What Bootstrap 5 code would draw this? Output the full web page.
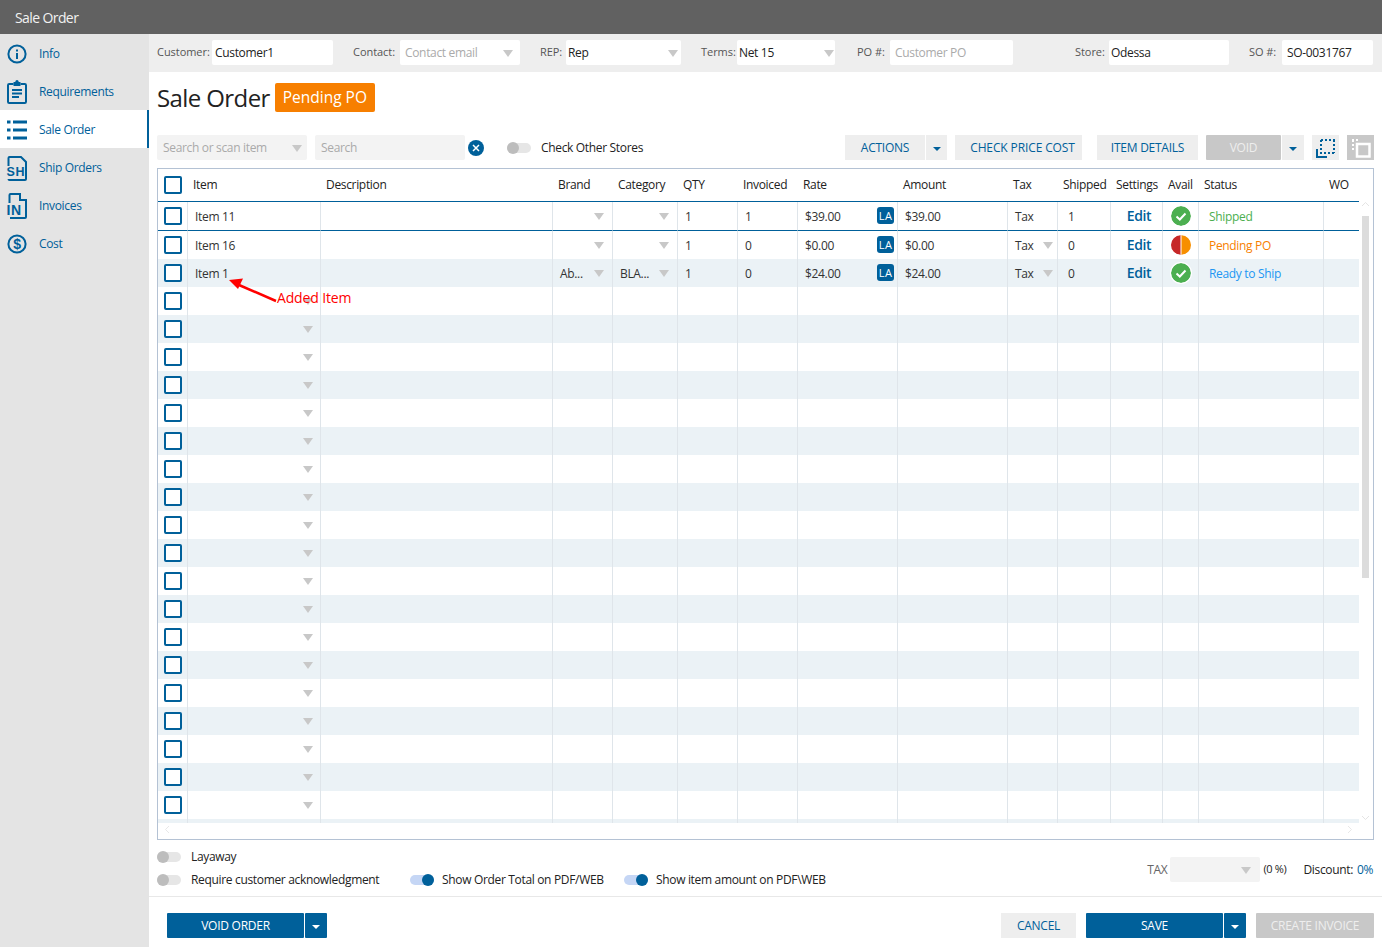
<!DOCTYPE html>
<html lang="en">
<head>
<meta charset="utf-8">
<title>Sale Order</title>
<link rel="stylesheet" href="https://cdn.jsdelivr.net/npm/bootstrap@5.3.0/dist/css/bootstrap.min.css">
<style>
html,body{height:100%;overflow:hidden}
body{font-family:"Open Sans","Noto Sans",sans-serif;font-size:12px;color:#222;letter-spacing:-.33px;background:#fff}
.app-head{height:34px;background:#616161;color:#f2f2f2;font-size:14px;letter-spacing:-.6px;padding-left:15px;line-height:36px;flex:none}
.app-body{height:913px}
.side{width:149px;background:#e4e4e4;flex:none}
.side-item{height:38px;display:flex;align-items:center;color:#00609a;text-decoration:none;padding-left:6px;padding-top:1px}
.side-item svg{width:22px;height:26px;flex:none;margin-right:11px}
.side-item.sel{background:#fff;border-right:2px solid #00609a}
.main{min-width:0;flex:1 1 0;position:relative}
.topbar{height:38px;background:#eee;padding:6px 9px 7px 8px;color:#555;flex:none}
.lbl{font-size:11px;letter-spacing:-.05px}
.fld{display:flex;align-items:center;justify-content:space-between;flex:none}
.inp{height:25px;background:#fff;border-radius:2px;padding-left:2px;line-height:26px;color:#222;position:relative;white-space:nowrap}
.inp.pad3{padding-left:3px}
.tri{display:inline-block;width:0;height:0;border-left:5.5px solid transparent;border-right:5.5px solid transparent;border-top:7px solid #c8c8c8}
.inp .tri{position:absolute;right:7px;top:10px}
.inp.tr3 .tri{right:3px}
.inp.tr1 .tri{right:1px}
.titlerow{height:40px;padding:11px 0 0 8px;flex:none}
.ttl{font-size:24px;line-height:29px;color:#222;margin:0;font-weight:400;letter-spacing:-.6px}
.stat{background:#f77f00;color:#fff;font-size:15.5px;height:29px;line-height:29px;padding:0 8px;border-radius:2px;margin-left:5px;letter-spacing:0}
.tools{height:25px;margin:23px 8px 0 8px;flex:none}
.grayinp{height:25px;background:#f3f3f3;border-radius:2px;color:#aaa;line-height:25px;padding-left:6px;position:relative}
.grayinp .tri{position:absolute;right:5px;top:10px}
.grayinp.tr9 .tri{right:9px}
.clr{width:16px;height:16px;flex:none}
.sw{width:24px;height:10px;border-radius:5px;background:#e6e6e6;position:relative;display:inline-block;flex:none}
.sw::after{content:"";position:absolute;left:0;top:-1px;width:12px;height:12px;border-radius:50%;background:#bdbdbd}
.sw.on{background:#c5d6f5}
.sw.on::after{left:12px;background:#00609a}
.tb{height:25px;line-height:25px;background:#eee;color:#00609a;text-align:center;border:0;padding:0;flex:none;font-size:12px;letter-spacing:-.25px;border-radius:0}
.tb.wide{padding-left:8px;letter-spacing:-.12px}
.tb.pri{background:#00609a;color:#fff;border-radius:1px}
.tb.dis{background:#c8c8c8;color:#eee;border-radius:1px}
.caret{width:0;height:0;display:inline-block;border-left:4px solid transparent;border-right:4px solid transparent;border-top:4px solid #00609a;vertical-align:middle}
.pri .caret{border-top-color:#fff}
.ml1{margin-left:1px}.ml8{margin-left:8px}
.ticon{width:27px;height:25px;background:#eee;flex:none;display:flex;align-items:center;justify-content:center}
.ticon.dis{background:#c8c8c8}
.gridbox{height:672px;margin:8px 8px 0 8px;border:1px solid #b4c2d4;position:relative;flex:none;width:1217px}
.gridclip{height:654px;width:1201px;overflow:hidden}
.dt{table-layout:fixed;width:1201px;margin:0;border-collapse:separate;border-spacing:0;--bs-table-bg:transparent;color:#333;font-size:12px}
.dt th,.dt td{padding:0;font-weight:400;vertical-align:middle;border:0;white-space:nowrap;overflow:hidden;position:relative}
.dt thead th{height:33px;border-bottom:1px solid #00609a;color:#222;padding-left:5px}
.dt thead th.chk{padding-left:6px}
.dt tbody td{height:28px;border-right:1px solid #dfe5ea;padding-left:7px;padding-top:2px}
.dt tbody tr.first td{height:29px;border-bottom:1px solid #00609a}
.dt tbody td.chk{padding-left:6px;padding-top:0}
.dt tbody td.nop{padding-top:0}
.dt tbody td.pl10{padding-left:10px}
.dt tbody td.last{border-right:0}
.dt tbody tr.shade td{background:#ebf2f6}
.box{width:18px;height:18px;border:2px solid #00609a;border-radius:2px;background:#fff;display:block}
.dt .tri{position:absolute;right:8px;top:11px}
.dt td.itm .tri{right:7px}
.dt .tri.rtax{right:4px}
.edit{color:#00609a;font-size:14px;font-weight:600;display:block;text-align:center;letter-spacing:-.35px;padding-bottom:2px;margin-left:-2px}
.la{position:absolute;right:3px;top:5px;width:17px;height:17px;background:#00609a;color:#fff;border-radius:3px;font-size:11px;line-height:18px;text-align:center;letter-spacing:.3px}
.av{width:20px;height:20px;display:block;margin-left:1px;border-radius:50%}
.av.ring{box-shadow:0 0 0 1px #fff}
.c-ship{color:#4caf50}.c-pend{color:#f77f00}.c-ready{color:#2196f3}
.sb{position:absolute;right:0;top:32px;width:15px;bottom:18px}
.sb-t{position:absolute;left:4px;top:15px;width:7px;height:362px;background:#dcdcdc}
.note{position:absolute;left:119px;top:119px;color:#f00;font-size:14px;line-height:20px;letter-spacing:-.15px;white-space:nowrap}
.arr{position:absolute;left:69px;top:108px;width:50px;height:26px}
.opts{height:57px;padding:5px 8px 0;flex:none;border-bottom:1px solid #e8e8e8}
.optline{height:23px}
.footer{height:42px;padding:16px 8px 0 18px;flex:none}
.c-link{color:#00609a;margin-left:1px}
.taxblk{margin-top:12px;margin-right:1px;height:25px}
.hscr{position:absolute;bottom:5px}
</style>
</head>
<body>
<div class="app-head">Sale Order</div>
<div class="app-body d-flex">
  <nav class="side">
    <a class="side-item" href="#"><svg viewBox="0 0 22 26"><circle cx="11" cy="13" r="8.6" fill="none" stroke="#00609a" stroke-width="2"/><rect x="10" y="12" width="2" height="6" fill="#00609a"/><rect x="10" y="8.5" width="2" height="2" fill="#00609a"/></svg>Info</a>
    <a class="side-item" href="#"><svg viewBox="0 0 22 26"><path d="M7.500 5H3.200Q2 5 2 6.200V22.800Q2 24 3.200 24H18.800Q20 24 20 22.800V6.200Q20 5 18.800 5H14.500" fill="none" stroke="#00609a" stroke-width="2"/><path d="M7.500 3H9.200Q9.500 1 11 1T12.800 3H14.500V7H7.500Z" fill="#00609a"/><path d="M6 11H16M6 14.500H16M6 18H13" stroke="#00609a" stroke-width="2"/></svg>Requirements</a>
    <a class="side-item sel" href="#"><svg viewBox="0 0 22 26"><path d="M1 5H4.500M1 13H4.500M1 21H4.500" stroke="#00609a" stroke-width="3"/><path d="M7 5H21M7 13H21M7 21H21" stroke="#00609a" stroke-width="3"/></svg>Sale Order</a>
    <a class="side-item" href="#"><svg viewBox="0 0 22 26"><path d="M2.500 11V3Q2.500 2 3.500 2H15L20 7V24Q20 25 19 25H3.500Q2.500 25 2.500 24" fill="none" stroke="#00609a" stroke-width="2"/><text x="0.500" y="21" font-family="Liberation Sans,sans-serif" font-size="12.5" font-weight="700" fill="#00609a" letter-spacing=".7">SH</text></svg>Ship Orders</a>
    <a class="side-item" href="#"><svg viewBox="0 0 22 26"><path d="M3.500 10V2Q3.500 1 4.500 1H14V7H20V24Q20 25 19 25H4" fill="none" stroke="#00609a" stroke-width="2"/><text x="0.500" y="22" font-family="Liberation Sans,sans-serif" font-size="14" font-weight="700" fill="#00609a" letter-spacing=".5">IN</text></svg>Invoices</a>
    <a class="side-item" href="#"><svg viewBox="0 0 22 26"><circle cx="11" cy="13" r="8.6" fill="none" stroke="#00609a" stroke-width="2"/><text x="11" y="18" text-anchor="middle" font-family="Liberation Sans,sans-serif" font-size="14" font-weight="700" fill="#00609a">$</text></svg>Cost</a>
  </nav>
  <main class="main d-flex flex-column">
    <div class="topbar d-flex">
      <div class="fld" style="width:176px"><span class="lbl">Customer:</span><span class="inp pad3" style="width:121px">Customer1</span></div>
      <div class="fld ms-auto" style="width:167px"><span class="lbl">Contact:</span><span class="inp" style="width:120px;padding-left:5px;color:#aaa">Contact email<i class="tri"></i></span></div>
      <div class="fld ms-auto" style="width:141px"><span class="lbl">REP:</span><span class="inp tr3" style="width:115px">Rep<i class="tri"></i></span></div>
      <div class="fld ms-auto" style="width:134px"><span class="lbl">Terms:</span><span class="inp tr1" style="width:98px">Net 15<i class="tri"></i></span></div>
      <div class="fld" style="width:156px;margin-left:22px"><span class="lbl">PO #:</span><span class="inp" style="width:123px;padding-left:5px;color:#aaa">Customer PO</span></div>
      <div class="fld" style="width:154px;margin-left:62px"><span class="lbl">Store:</span><span class="inp" style="width:120px">Odessa</span></div>
      <div class="fld ms-auto" style="width:124px"><span class="lbl">SO #:</span><span class="inp" style="width:91px;padding-left:5px">SO-0031767</span></div>
    </div>
    <div class="titlerow d-flex align-items-start"><h1 class="ttl">Sale Order</h1><span class="stat">Pending PO</span></div>
    <div class="tools d-flex align-items-center">
      <div class="grayinp" style="width:150px">Search or scan item<i class="tri"></i></div>
      <div class="grayinp ml8" style="width:150px">Search</div>
      <svg class="clr" style="margin-left:3px" viewBox="0 0 16 16"><circle cx="8" cy="8" r="8" fill="#00609a"/><path d="M5 5L11 11M11 5L5 11" stroke="#fff" stroke-width="1.500"/></svg>
      <span class="sw" style="margin-left:23px"></span><span style="margin-left:10px;color:#222">Check Other Stores</span>
      <button class="tb ms-auto" style="width:80px">ACTIONS</button><button class="tb ml1" style="width:21px"><i class="caret"></i></button>
      <button class="tb wide ml8" style="width:127px">CHECK PRICE COST</button>
      <button class="tb" style="width:101px;margin-left:15px">ITEM DETAILS</button>
      <button class="tb dis ml8" style="width:75px">VOID</button><button class="tb ml1" style="width:22px"><i class="caret"></i></button>
      <span class="ticon ml8"><svg width="20" height="20" viewBox="0 0 20 20"><path d="M1 11V19H11" fill="none" stroke="#00609a" stroke-width="2"/><path d="M5 2H19M18 2V15M5 2V15H19" fill="none" stroke="#00609a" stroke-width="2" stroke-dasharray="2 2"/></svg></span>
      <span class="ticon dis ml8"><svg width="20" height="20" viewBox="0 0 20 20"><path d="M1 2H9M2 2V12" fill="none" stroke="#fff" stroke-width="2" stroke-dasharray="2 2"/><rect x="6" y="6" width="12.500" height="12.500" fill="none" stroke="#fff" stroke-width="2.500"/></svg></span>
    </div>
    <div class="gridbox">
      <div class="gridclip">
      <table class="table dt">
        <colgroup><col style="width:30px"><col style="width:133px"><col style="width:232px"><col style="width:60px"><col style="width:65px"><col style="width:60px"><col style="width:60px"><col style="width:100px"><col style="width:110px"><col style="width:50px"><col style="width:53px"><col style="width:52px"><col style="width:36px"><col style="width:125px"><col style="width:35px"></colgroup>
        <thead><tr><th class="chk"><span class="box"></span></th><th>Item</th><th>Description</th><th>Brand</th><th>Category</th><th>QTY</th><th>Invoiced</th><th>Rate</th><th>Amount</th><th>Tax</th><th>Shipped</th><th>Settings</th><th>Avail</th><th>Status</th><th>WO</th></tr></thead>
        <tbody id="rows">
          <tr class="first"><td class="chk"><span class="box"></span></td><td>Item 11</td><td></td><td><i class="tri"></i></td><td><i class="tri"></i></td><td>1</td><td class="pl10">1</td><td>$39.00<span class="la">LA</span></td><td>$39.00</td><td>Tax</td><td class="pl10">1</td><td class="nop"><span class="edit">Edit</span></td><td class="nop"><svg class="av" viewBox="0 0 20 20"><circle cx="10" cy="10" r="10" fill="#4caf50"/><path d="M5.500 10.500L8.800 13.500L14.500 7.500" fill="none" stroke="#fff" stroke-width="2"/></svg></td><td class="c-ship pl10">Shipped</td><td class="last"></td></tr>
          <tr><td class="chk"><span class="box"></span></td><td>Item 16</td><td></td><td><i class="tri"></i></td><td><i class="tri"></i></td><td>1</td><td class="pl10">0</td><td>$0.00<span class="la">LA</span></td><td>$0.00</td><td>Tax<i class="tri rtax"></i></td><td class="pl10">0</td><td class="nop"><span class="edit">Edit</span></td><td class="nop"><svg class="av" viewBox="0 0 20 20"><path d="M9.500 0A10 10 0 0 0 9.500 20Z" fill="#c62828"/><path d="M10.500 0A10 10 0 0 1 10.500 20Z" fill="#f78f00"/></svg></td><td class="c-pend pl10">Pending PO</td><td class="last"></td></tr>
          <tr class="shade"><td class="chk"><span class="box"></span></td><td>Item 1</td><td></td><td>Ab...<i class="tri"></i></td><td>BLA...<i class="tri"></i></td><td>1</td><td class="pl10">0</td><td>$24.00<span class="la">LA</span></td><td>$24.00</td><td>Tax<i class="tri rtax"></i></td><td class="pl10">0</td><td class="nop"><span class="edit">Edit</span></td><td class="nop"><svg class="av ring" viewBox="0 0 20 20"><circle cx="10" cy="10" r="10" fill="#4caf50"/><path d="M5.500 10.500L8.800 13.500L14.500 7.500" fill="none" stroke="#fff" stroke-width="2"/></svg></td><td class="c-ready pl10">Ready to Ship</td><td class="last"></td></tr>
        </tbody>
      </table>
      </div>
      <div class="sb"><svg class="position-absolute" style="left:3px;top:0" width="9" height="6" viewBox="0 0 9 6"><path d="M1 5L4.500 1.500L8 5" fill="none" stroke="#e4e4e4"/></svg><div class="sb-t"></div><svg class="position-absolute" style="left:3px;bottom:0" width="9" height="6" viewBox="0 0 9 6"><path d="M1 1L4.500 4.500L8 1" fill="none" stroke="#e4e4e4"/></svg></div>
      <svg class="hscr" style="left:6px" width="6" height="9" viewBox="0 0 6 9"><path d="M5 1L1.500 4.500L5 8" fill="none" stroke="#e8e8e8"/></svg>
      <svg class="hscr" style="right:20px" width="6" height="9" viewBox="0 0 6 9"><path d="M1 1L4.500 4.500L1 8" fill="none" stroke="#e8e8e8"/></svg>
      <svg class="arr" viewBox="0 0 50 26"><path d="M49 24L12 8" stroke="#f00" stroke-width="2.500"/><path d="M2 3L16 1.500L11 12Z" fill="#f00"/></svg>
      <span class="note">Added Item</span>
    </div>
    <div class="opts d-flex justify-content-between">
      <div>
        <div class="optline d-flex align-items-center"><span class="sw"></span><span style="margin-left:10px">Layaway</span></div>
        <div class="optline d-flex align-items-center"><span class="sw"></span><span style="margin-left:10px;width:219px">Require customer acknowledgment</span><span class="sw on"></span><span style="margin-left:8px;width:182px">Show Order Total on PDF/WEB</span><span class="sw on"></span><span style="margin-left:8px">Show item amount on PDF\WEB</span></div>
      </div>
      <div class="taxblk d-flex align-items-center"><span style="color:#666">TAX</span><span class="grayinp tr9" style="width:90px;margin-left:3px"><i class="tri"></i></span><span style="margin-left:3px;font-size:11px">(0 %)</span><span style="margin-left:17px">Discount: <span class="c-link">0%</span></span></div>
    </div>
    <div class="footer d-flex align-items-start">
      <button class="tb pri" style="width:137px">VOID ORDER</button><button class="tb pri ml1" style="width:22px"><i class="caret"></i></button>
      <button class="tb ms-auto" style="width:75px">CANCEL</button>
      <button class="tb pri" style="width:137px;margin-left:10px">SAVE</button><button class="tb pri ml1" style="width:22px"><i class="caret"></i></button>
      <button class="tb dis" style="width:118px;margin-left:10px">CREATE INVOICE</button>
    </div>
  </main>
</div>
<script>
var b=document.getElementById('rows'),h='';
for(var n=4;n<=24;n++){
  h+='<tr'+(n%2?' class="shade"':'')+'><td class="chk"><span class="box"></span></td><td class="itm"><i class="tri"></i></td>';
  for(var c=0;c<12;c++)h+='<td></td>';
  h+='<td class="last"></td></tr>';
}
b.insertAdjacentHTML('beforeend',h);
document.querySelectorAll('#rows tr').forEach(function(r){var c=r.cells[6];if(c.textContent)c.classList.remove('pl10');});
</script>
<script src="https://cdn.jsdelivr.net/npm/bootstrap@5.3.0/dist/js/bootstrap.bundle.min.js"></script>
</body>
</html>
